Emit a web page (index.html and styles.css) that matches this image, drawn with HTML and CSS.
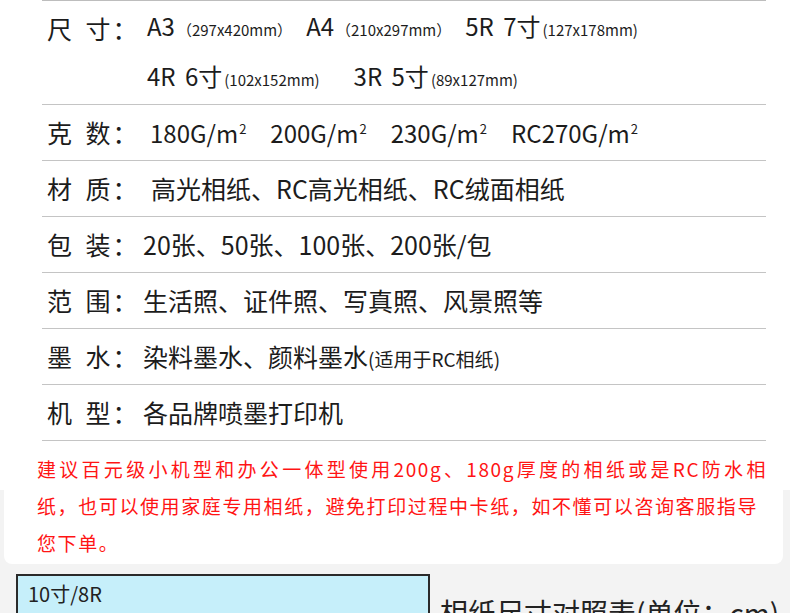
FILE: index.html
```html
<!DOCTYPE html>
<html lang="zh-CN">
<head>
<meta charset="UTF-8" />
<meta name="viewport" content="width=device-width, initial-scale=1" />
<title>相纸参数</title>
<link rel="stylesheet" href="styles.css">
</head>
<body>

<div class="page">

  <!-- Spec table -->
  <div class="specs">
    <div class="row row-size">
      <div class="label">尺 寸<span class="colon">：</span></div>
      <div class="value sizes">
        <div class="size-line">
          <span class="big">A3</span><span class="small">（297x420mm）</span>
          <span class="big">A4</span><span class="small">（210x297mm）</span>
          <span class="big">5R 7寸</span><span class="small">(127x178mm)</span>
        </div>
        <div class="size-line">
          <span class="big">4R 6寸</span><span class="small">(102x152mm)</span>
          <span class="big gap-left">3R 5寸</span><span class="small">(89x127mm)</span>
        </div>
      </div>
    </div>

    <div class="row">
      <div class="label">克 数<span class="colon">：</span></div>
      <div class="value weights">
        <span>180G/m<sup>2</sup></span>
        <span>200G/m<sup>2</sup></span>
        <span>230G/m<sup>2</sup></span>
        <span>RC270G/m<sup>2</sup></span>
      </div>
    </div>

    <div class="row">
      <div class="label">材 质<span class="colon">：</span></div>
      <div class="value shift">高光相纸、RC高光相纸、RC绒面相纸</div>
    </div>

    <div class="row">
      <div class="label">包 装<span class="colon">：</span></div>
      <div class="value">20张、50张、100张、200张/包</div>
    </div>

    <div class="row">
      <div class="label">范 围<span class="colon">：</span></div>
      <div class="value">生活照、证件照、写真照、风景照等</div>
    </div>

    <div class="row">
      <div class="label">墨 水<span class="colon">：</span></div>
      <div class="value">染料墨水、颜料墨水<span class="note">(适用于RC相纸)</span></div>
    </div>

    <div class="row">
      <div class="label">机 型<span class="colon">：</span></div>
      <div class="value">各品牌喷墨打印机</div>
    </div>
  </div>

  <!-- Red advice -->
  <div class="notice">
    <p>
      <span class="first-line">建议百元级小机型和办公一体型使用200g、180g厚度的相纸或是RC防水相</span>
      纸，也可以使用家庭专用相纸，避免打印过程中卡纸，如不懂可以咨询客服指导<br>您下单。
    </p>
  </div>

  <!-- Size chart header -->
  <div class="chart">
    <div class="chart-box">10寸/8R</div>
    <div class="chart-title">相纸尺寸对照表(单位：cm)</div>
  </div>

</div>

</body>
</html>
```

FILE: styles.css
```css
body {
  margin: 0;
  font-family: "Noto Sans CJK SC", "Noto Sans", sans-serif;
  color: #1c1c1c;
}

/* White top, light grey from the notice down */
.page {
  background: linear-gradient(#fff 490px, #f3f3f3 490px);
  min-height: 613px;
  overflow: hidden;
}

/* Spec table */
.specs {
  margin: 0 24px 0 42px;
  border-top: 1px solid #bdbdbd;
}

.row {
  display: flex;
  align-items: center;
  height: 55px;
  padding-left: 5px;
  border-bottom: 1.5px solid #c4c4c4;
  font-size: 25px;
  line-height: 1;
}

.row-size {
  height: 103px;
  align-items: stretch;
}

.label {
  width: 96px;
  flex-shrink: 0;
  white-space: pre;
  word-spacing: 8px;
}

.colon {
  margin-left: 2px;
}

.value {
  white-space: nowrap;
}

.shift {
  padding-left: 8px;
}

/* Size lines */
.sizes {
  display: flex;
  flex-direction: column;
  padding-left: 4px;
}

.row-size .label {
  padding-top: 15px;
}

.size-line {
  height: 50px;
  display: flex;
  align-items: center;
}

.big {
  font-size: 24px;
  word-spacing: 4px;
  white-space: pre;
}

.small {
  font-size: 15px;
  margin: 6px 14px 0 2px;
}

.gap-left {
  margin-left: 20px;
}

/* Weights */
.weights {
  display: flex;
  gap: 24px;
  padding-left: 7px;
  font-size: 24px;
}

.weights sup {
  font-size: 13px;
  vertical-align: 9px;
  margin-left: 1px;
}

.note {
  font-size: 19px;
}

/* Red advice */
.notice {
  margin: 0 7px 0 4px;
  padding: 9px 16px 3px 33px;
  background: #fff;
  border-radius: 0 0 8px 8px;
}

.notice p {
  margin: 0;
  color: #ff1414;
  font-size: 19px;
  line-height: 37px;
  letter-spacing: 1.6px;
}

.first-line {
  display: block;
  text-align: justify;
  text-align-last: justify;
}

/* Size chart header */
.chart {
  display: flex;
  margin-top: 10px;
  padding-left: 16px;
}

.chart-box {
  width: 414px;
  height: 60px;
  flex-shrink: 0;
  border: 2px solid #2a2a2a;
  background: #c6effa;
  padding: 5px 10px;
  font-size: 20px;
  line-height: 26px;
  color: #222;
  box-sizing: border-box;
}

.chart-title {
  padding: 18px 0 0 10px;
  font-size: 28px;
  white-space: nowrap;
  color: #222;
}
```
